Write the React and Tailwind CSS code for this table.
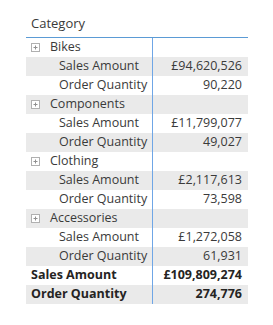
import React from "react";

const groups = [
  { name: "Bikes", sales: "£94,620,526", qty: "90,220" },
  { name: "Components", sales: "£11,799,077", qty: "49,027" },
  { name: "Clothing", sales: "£2,117,613", qty: "73,598" },
  { name: "Accessories", sales: "£1,272,058", qty: "61,931" },
];

function PlusBox() {
  return (
    <svg width="9" height="9" viewBox="0 0 9 9" className="shrink-0">
      <rect x="0.5" y="0.5" width="8" height="8" fill="white" stroke="#b0b0b0" />
      <path d="M2.5 4.5h4M4.5 2.5v4" stroke="#909090" />
    </svg>
  );
}

function Row({ shaded, left, right, bold }) {
  return (
    <div className={`flex h-[19px] ${shaded ? "bg-[#eaeaea]" : "bg-white"} ${bold ? "font-bold text-[#252423]" : ""}`}>
      <div className="w-[126px] shrink-0 flex items-center">{left}</div>
      <div className="w-px shrink-0 bg-[#6fa6e6]" />
      <div className="flex-1 flex items-center justify-end pr-[6px]">{right}</div>
    </div>
  );
}

export default function App() {
  const rows = [];
  groups.forEach((g) => {
    rows.push({
      left: (
        <div className="flex items-center pl-[5px] gap-[10px]">
          <PlusBox />
          <span>{g.name}</span>
        </div>
      ),
      right: null,
    });
    rows.push({ left: <span className="pl-[33px]">Sales Amount</span>, right: g.sales });
    rows.push({ left: <span className="pl-[33px]">Order Quantity</span>, right: g.qty });
  });
  rows.push({ left: <span className="pl-[5px]">Sales Amount</span>, right: "£109,809,274", bold: true });
  rows.push({ left: <span className="pl-[5px]">Order Quantity</span>, right: "274,776", bold: true });

  return (
    <div
      className="w-[273px] h-[325px] bg-white pl-[26px] pt-[10px] text-[12.5px] text-[#3a3a3a]"
      style={{ fontFamily: '"Open Sans", "Noto Sans", sans-serif' }}
    >
      <div className="w-[222px]">
        <div className="h-[28px] flex items-center pl-[5px] border-b border-b-[#5b9bd5] text-[13px]">Category</div>
        {rows.map((r, i) => (
          <Row key={i} shaded={i % 2 === 1} left={r.left} right={r.right} bold={r.bold} />
        ))}
      </div>
    </div>
  );
}
